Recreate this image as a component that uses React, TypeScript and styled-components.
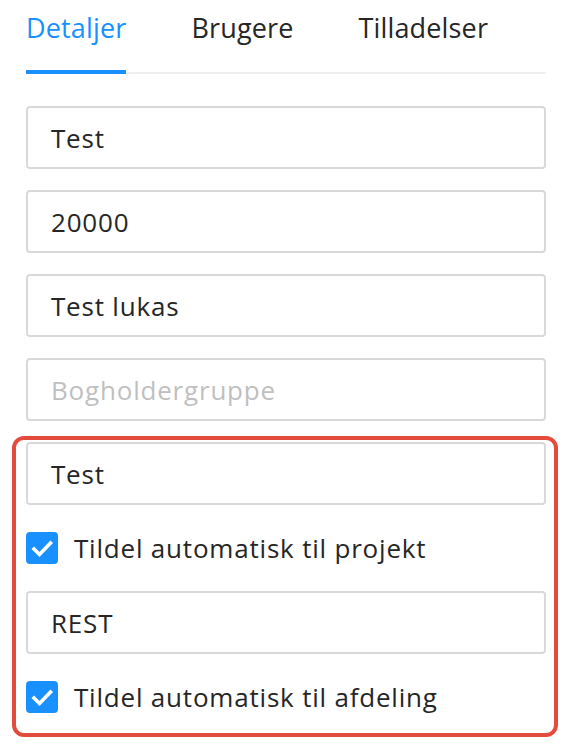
import React from "react";
import styled, { createGlobalStyle } from "styled-components";

const Global = createGlobalStyle`
  html, body { margin: 0; padding: 0; background: #fff; }
  body { font-family: "Open Sans", "Noto Sans", sans-serif; color: #262626; }
  * { box-sizing: border-box; }
`;

const Page = styled.div`
  width: 574px;
  padding: 0 28px 0 26px;
`;

const TabBar = styled.div`
  display: flex;
  gap: 65px;
  height: 74px;
  border-bottom: 2px solid #f0f0f0;
`;

const Tab = styled.div<{ $active?: boolean }>`
  position: relative;
  font-size: 27px;
  line-height: 28px;
  letter-spacing: 0.15px;
  padding-top: 14px;
  color: ${(p) => (p.$active ? "#1890ff" : "#262626")};
  &::after {
    content: "";
    display: ${(p) => (p.$active ? "block" : "none")};
    position: absolute;
    left: 0;
    right: 0;
    bottom: -2px;
    height: 4px;
    background: #1890ff;
  }
`;

const Form = styled.div`
  display: flex;
  flex-direction: column;
  gap: 21px;
  padding-top: 32px;
`;

const Input = styled.div<{ $placeholder?: boolean }>`
  height: 63px;
  border: 2px solid #d9d9d9;
  border-radius: 4px;
  display: flex;
  align-items: center;
  padding-left: 23px;
  font-size: 26px;
  letter-spacing: 0.8px;
  line-height: 32px;
  color: ${(p) => (p.$placeholder ? "#bfbfbf" : "#262626")};
`;

const Highlight = styled.div`
  margin: -6px -12px 0 -14px;
  padding: 2px 8px 20px 10px;
  border: 4px solid #e34b3c;
  border-radius: 12px;
  display: flex;
  flex-direction: column;
  gap: 27px;
`;

const CheckRow = styled.label`
  display: flex;
  align-items: center;
  gap: 16px;
  height: 32px;
  font-size: 26px;
  letter-spacing: 0.8px;
  line-height: 32px;
  color: #262626;
`;

const Box = styled.span`
  width: 32px;
  height: 32px;
  border-radius: 4px;
  background: #1890ff;
  display: block;
  flex: none;
`;

const Check = () => (
  <Box>
    <svg width="32" height="32" viewBox="0 0 32 32">
      <path d="M8 17 L13.5 22.5 L24.5 11" fill="none" stroke="#fff" strokeWidth="3.6" strokeLinecap="square" />
    </svg>
  </Box>
);

export default function App() {
  return (
    <Page>
      <Global />
      <TabBar>
        <Tab $active>Detaljer</Tab>
        <Tab>Brugere</Tab>
        <Tab>Tilladelser</Tab>
      </TabBar>
      <Form>
        <Input>Test</Input>
        <Input>20000</Input>
        <Input>Test lukas</Input>
        <Input $placeholder>Bogholdergruppe</Input>
        <Highlight>
          <Input>Test</Input>
          <CheckRow>
            <Check />
            Tildel automatisk til projekt
          </CheckRow>
          <Input>REST</Input>
          <CheckRow>
            <Check />
            Tildel automatisk til afdeling
          </CheckRow>
        </Highlight>
      </Form>
    </Page>
  );
}
